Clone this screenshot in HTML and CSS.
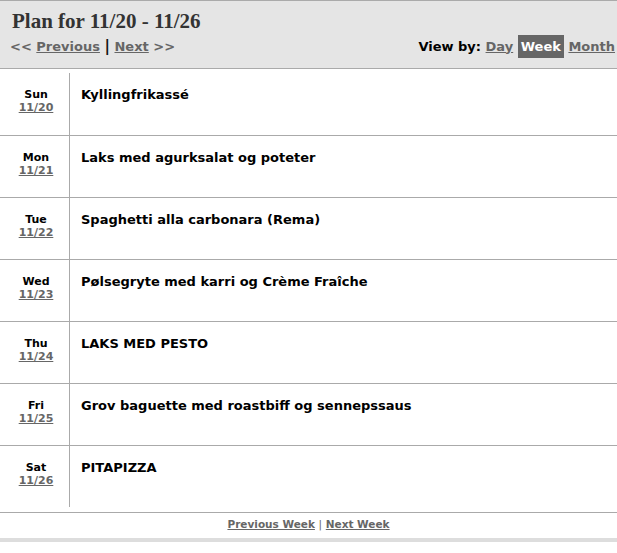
FILE: index.html
```html
<!DOCTYPE html>
<html lang="en">
<head>
    <meta charset="UTF-8">
    <title>Plan for 11/20 - 11/26</title>
    <link rel="stylesheet" href="styles.css">
</head>
<body>
    <div class="header">
        <h1>Plan for 11/20 - 11/26</h1>
        <div class="nav">
            <div class="pager">
                &lt;&lt; <a href="#">Previous</a> <span class="sep">|</span> <a href="#">Next</a> &gt;&gt;
            </div>
            <div class="view-by">
                View by: <a href="#">Day</a> <span class="current">Week</span> <a href="#">Month</a>
            </div>
        </div>
    </div>

    <table class="week">
        <tr>
            <td class="day">Sun<br><a href="#">11/20</a></td>
            <td class="meal">Kyllingfrikassé</td>
        </tr>
        <tr>
            <td class="day">Mon<br><a href="#">11/21</a></td>
            <td class="meal">Laks med agurksalat og poteter</td>
        </tr>
        <tr>
            <td class="day">Tue<br><a href="#">11/22</a></td>
            <td class="meal">Spaghetti alla carbonara (Rema)</td>
        </tr>
        <tr>
            <td class="day">Wed<br><a href="#">11/23</a></td>
            <td class="meal">Pølsegryte med karri og Crème Fraîche</td>
        </tr>
        <tr>
            <td class="day">Thu<br><a href="#">11/24</a></td>
            <td class="meal">LAKS MED PESTO</td>
        </tr>
        <tr>
            <td class="day">Fri<br><a href="#">11/25</a></td>
            <td class="meal">Grov baguette med roastbiff og sennepssaus</td>
        </tr>
        <tr>
            <td class="day">Sat<br><a href="#">11/26</a></td>
            <td class="meal">PITAPIZZA</td>
        </tr>
    </table>

    <div class="footer">
        <a href="#">Previous Week</a> <span class="sep">|</span> <a href="#">Next Week</a>
    </div>
    <div class="bottom-bar"></div>
</body>
</html>
```

FILE: styles.css
```css
body {
    margin: 0;
    font-family: "DejaVu Sans", Verdana, sans-serif;
    font-weight: bold;
    color: #000;
    background: #fff;
}
a {
    color: #666;
}
.header {
    background: #e5e5e5;
    border-top: 1px solid #aaa;
    border-bottom: 1px solid #aaa;
    box-sizing: border-box;
    height: 69px;
}
h1 {
    margin: 0;
    padding: 8px 0 0 12px;
    font-family: "Liberation Serif", Georgia, serif;
    font-size: 21px;
    color: #333;
    line-height: 24px;
}
.nav {
    display: flex;
    justify-content: space-between;
    align-items: center;
    padding: 4px 2px 0 10px;
    font-size: 13px;
    color: #666;
}
.pager .sep {
    color: #111;
    font-size: 15px;
}
.view-by {
    color: #000;
}
.view-by .current {
    background: #666;
    color: #fff;
    padding: 4px 3px;
}
table.week {
    width: 100%;
    margin-top: 4px;
    border-collapse: collapse;
}
table.week tr {
    height: 62px;
    border-bottom: 1px solid #aaa;
}
table.week tr:last-child {
    border-bottom: none;
}
table.week td {
    vertical-align: top;
}
table.week td.day {
    width: 66px;
    border-right: 1px solid #aaa;
    text-align: center;
    font-size: 11px;
    line-height: 13px;
    padding: 15px 0 0 3px;
}
table.week td.meal {
    font-size: 13px;
    line-height: 16px;
    padding: 14px 0 0 11px;
}
.footer {
    margin-top: 5px;
    border-top: 1px solid #aaa;
    text-align: center;
    font-size: 10.5px;
    padding: 5px 0 0;
    height: 20px;
    color: #666;
}
.footer .sep {
    font-weight: normal;
}
.bottom-bar {
    height: 4px;
    background: #ddd;
}
```
